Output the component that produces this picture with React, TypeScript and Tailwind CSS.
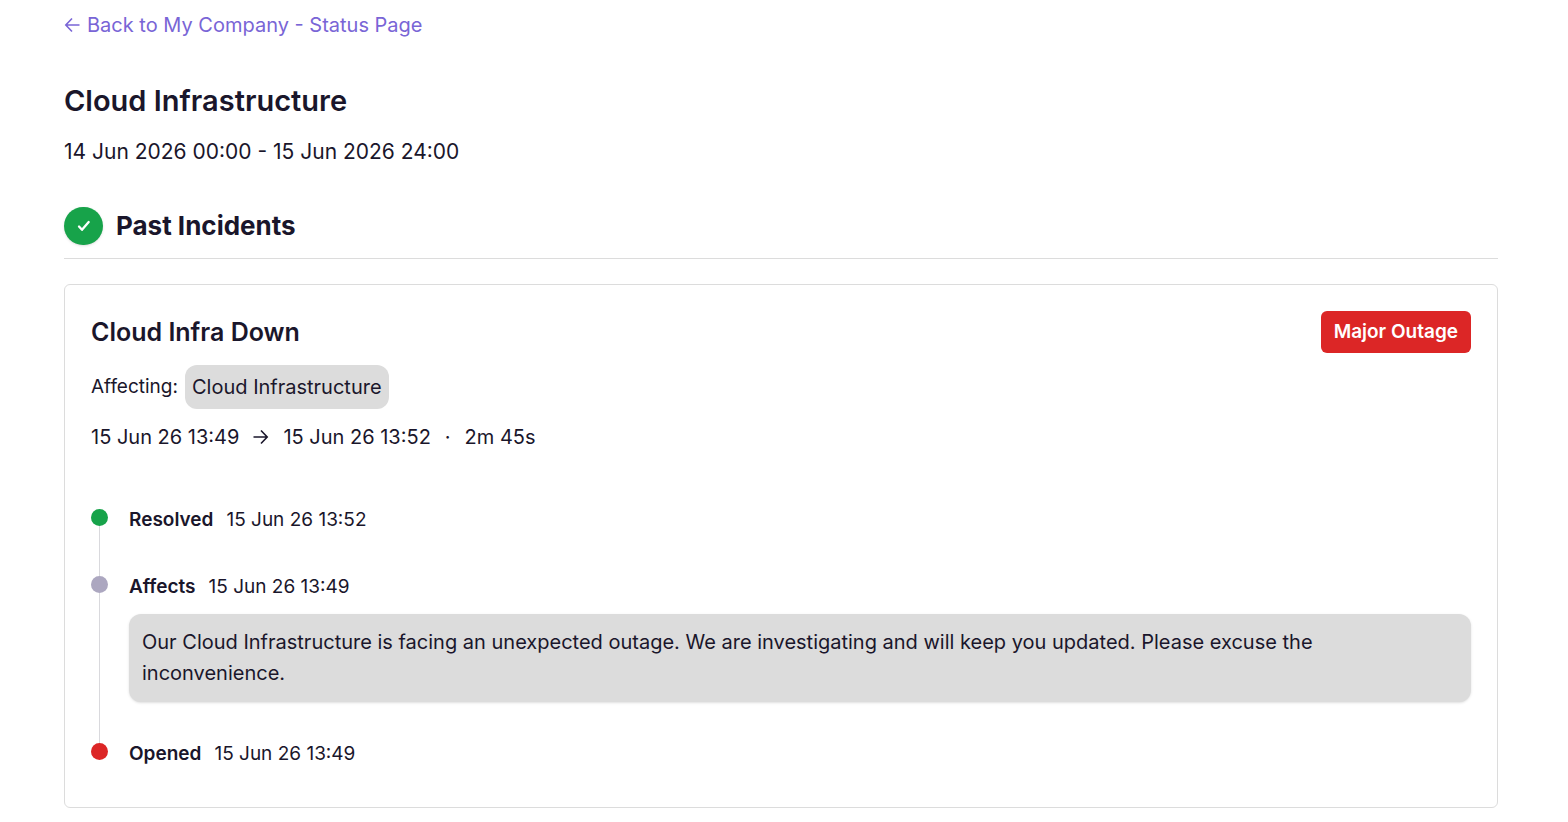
import React from "react";

type Update = { label: string; time: string; dot: string; message?: string };

const updates: Update[] = [
  { label: "Resolved", time: "15 Jun 26 13:52", dot: "bg-[#17a34a]" },
  {
    label: "Affects",
    time: "15 Jun 26 13:49",
    dot: "bg-[#aca7c0]",
    message:
      "Our Cloud Infrastructure is facing an unexpected outage. We are investigating and will keep you updated. Please excuse the inconvenience.",
  },
  { label: "Opened", time: "15 Jun 26 13:49", dot: "bg-[#dc2626]" },
];

function Arrow({ back = false }: { back?: boolean }) {
  return (
    <svg
      viewBox="0 0 16 16"
      className="size-4 shrink-0"
      fill="none"
      stroke="currentColor"
      strokeWidth="1.6"
      aria-hidden="true"
    >
      {back ? <path d="M15.5 8H1.5M8 1.5 1.8 8 8 14.5" /> : <path d="M.5 8h14M8 1.5 14.2 8 8 14.5" />}
    </svg>
  );
}

export default function App() {
  return (
    <main className="bg-white pt-[9px] pr-[70px] pb-3 pl-16 font-['Inter','Liberation_Sans',sans-serif] text-[20px] leading-8 text-[#1a162b]">
      <a href="#status" className="flex w-fit items-center gap-[7px] text-[#7965d6]">
        <Arrow back />
        Back to My Company - Status Page
      </a>

      <h1 className="mt-10 text-[29px] leading-10 font-semibold">Cloud Infrastructure</h1>
      <p className="mt-[15px] text-[21px]">14 Jun 2026 00:00 - 15 Jun 2026 24:00</p>

      <section>
        <div className="mt-[39px] flex items-center gap-[13px] border-b border-[#dcdcdc] pb-[13px]">
          <span className="flex h-[38px] w-[39px] items-center justify-center rounded-full bg-[#17a34a] text-white shadow-sm">
            <svg
              viewBox="0 0 14 14"
              className="size-3.5"
              fill="none"
              stroke="currentColor"
              strokeWidth="2.3"
              strokeLinecap="round"
              strokeLinejoin="round"
              aria-hidden="true"
            >
              <path d="M2 7.5 5 10.8 11.7 3" />
            </svg>
          </span>
          <h2 className="text-[26px] leading-9 font-bold">Past Incidents</h2>
        </div>

        <article className="mt-[25px] rounded-md border border-[#dcdcdc] px-[26px] pt-[26px] pb-[38px]">
          <div className="flex items-center justify-between">
            <h3 className="text-[25px] leading-8 font-semibold">Cloud Infra Down</h3>
            <span className="rounded-md bg-[#dc2626] px-[13px] py-[5px] text-[19px] font-semibold text-white">
              Major Outage
            </span>
          </div>

          <div className="mt-3 flex items-center gap-[7px]">
            <span className="text-[19px]">Affecting:</span>
            <span className="rounded-xl bg-[#dcdcdc] px-[7px] py-1.5">Cloud Infrastructure</span>
          </div>

          <p className="mt-3 flex items-center gap-[14px]">
            <span>15 Jun 26 13:49</span>
            <Arrow />
            <span>15 Jun 26 13:52</span>
            <span>·</span>
            <span>2m 45s</span>
          </p>

          <ol className="mt-[52px]">
            {updates.map((u, i) => (
              <li key={u.label} className="flex gap-[21px]">
                <div className="flex w-[17px] shrink-0 flex-col items-center pt-1">
                  <span className={`size-[17px] shrink-0 rounded-full ${u.dot}`} />
                  {i < updates.length - 1 && <span className="-mb-1 w-px grow bg-[#d9d9dd]" />}
                </div>
                <div className={i < updates.length - 1 ? "min-w-0 grow pb-[37px]" : "min-w-0 grow"}>
                  <div className="flex gap-[13px] text-[19px] leading-[30px]">
                    <span className="font-semibold">{u.label}</span>
                    <time>{u.time}</time>
                  </div>
                  {u.message && (
                    <p className="mt-3 rounded-xl bg-[#dcdcdc] px-[13px] py-[13px] leading-[31px] shadow-sm">{u.message}</p>
                  )}
                </div>
              </li>
            ))}
          </ol>
        </article>
      </section>
    </main>
  );
}
